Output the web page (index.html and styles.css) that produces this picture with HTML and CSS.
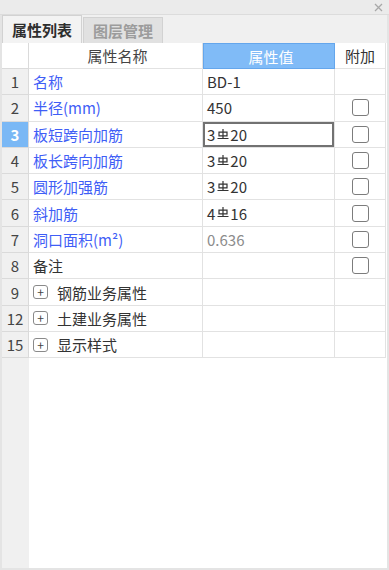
FILE: index.html
```html
<!DOCTYPE html>
<html lang="zh-CN">
<head>
  <meta charset="UTF-8">
  <title>属性列表</title>
  <link rel="stylesheet" href="styles.css">
</head>
<body>
  <div class="titlebar">
    <svg class="close" width="9" height="9" viewBox="0 0 9 9"><path d="M1 1L8 8M8 1L1 8" stroke="#a8a8a8" stroke-width="1.3"/></svg>
  </div>
  <div class="panel">
    <div class="tabs">
      <div class="tab active">属性列表</div>
      <div class="tab">图层管理</div>
    </div>
    <div class="grid">
      <div class="row head">
        <div class="cell num"></div>
        <div class="cell name">属性名称</div>
        <div class="cell value">属性值</div>
        <div class="cell extra">附加</div>
      </div>
      <div class="row">
        <div class="cell num">1</div>
        <div class="cell name link">名称</div>
        <div class="cell value">BD-1</div>
        <div class="cell extra"></div>
      </div>
      <div class="row">
        <div class="cell num">2</div>
        <div class="cell name link">半径(mm)</div>
        <div class="cell value">450</div>
        <div class="cell extra"><span class="check"></span></div>
      </div>
      <div class="row current">
        <div class="cell num">3</div>
        <div class="cell name link">板短跨向加筋</div>
        <div class="cell value">3<svg class="bar" width="12" height="11" viewBox="0 0 12 11"><path d="M6 0V9.5M2 3.2h8v3.6H2zM0.5 9.5h11" stroke="currentColor" fill="none" stroke-width="1.2"/></svg>20</div>
        <div class="cell extra"><span class="check"></span></div>
      </div>
      <div class="row">
        <div class="cell num">4</div>
        <div class="cell name link">板长跨向加筋</div>
        <div class="cell value">3<svg class="bar" width="12" height="11" viewBox="0 0 12 11"><path d="M6 0V9.5M2 3.2h8v3.6H2zM0.5 9.5h11" stroke="currentColor" fill="none" stroke-width="1.2"/></svg>20</div>
        <div class="cell extra"><span class="check"></span></div>
      </div>
      <div class="row">
        <div class="cell num">5</div>
        <div class="cell name link">圆形加强筋</div>
        <div class="cell value">3<svg class="bar" width="12" height="11" viewBox="0 0 12 11"><path d="M6 0V9.5M2 3.2h8v3.6H2zM0.5 9.5h11" stroke="currentColor" fill="none" stroke-width="1.2"/></svg>20</div>
        <div class="cell extra"><span class="check"></span></div>
      </div>
      <div class="row">
        <div class="cell num">6</div>
        <div class="cell name link">斜加筋</div>
        <div class="cell value">4<svg class="bar" width="12" height="11" viewBox="0 0 12 11"><path d="M6 0V9.5M2 3.2h8v3.6H2zM0.5 9.5h11" stroke="currentColor" fill="none" stroke-width="1.2"/></svg>16</div>
        <div class="cell extra"><span class="check"></span></div>
      </div>
      <div class="row">
        <div class="cell num">7</div>
        <div class="cell name link">洞口面积(m²)</div>
        <div class="cell value muted">0.636</div>
        <div class="cell extra"><span class="check"></span></div>
      </div>
      <div class="row">
        <div class="cell num">8</div>
        <div class="cell name">备注</div>
        <div class="cell value"></div>
        <div class="cell extra"><span class="check"></span></div>
      </div>
      <div class="row">
        <div class="cell num">9</div>
        <div class="cell name"><span class="expand">+</span>钢筋业务属性</div>
        <div class="cell value"></div>
        <div class="cell extra"></div>
      </div>
      <div class="row">
        <div class="cell num">12</div>
        <div class="cell name"><span class="expand">+</span>土建业务属性</div>
        <div class="cell value"></div>
        <div class="cell extra"></div>
      </div>
      <div class="row">
        <div class="cell num">15</div>
        <div class="cell name"><span class="expand">+</span>显示样式</div>
        <div class="cell value"></div>
        <div class="cell extra"></div>
      </div>
      <div class="filler"><div class="num"></div></div>
    </div>
  </div>
</body>
</html>
```

FILE: styles.css
```css
body {
  margin: 0;
  font-family: "Noto Sans CJK SC", "Noto Sans", sans-serif;
  font-size: 15px;
  color: #333;
  background: #fff;
}

.titlebar {
  height: 15px;
  box-sizing: border-box;
  background: #ebebeb;
  border-bottom: 1px solid #dcdcdc;
  display: flex;
  justify-content: flex-end;
  align-items: center;
  padding-right: 6px;
}

.panel {
  height: 555px;
  box-sizing: border-box;
  border: 2px solid #e4e4e4;
  border-top: none;
  display: flex;
  flex-direction: column;
}

.tabs {
  height: 28px;
  flex-shrink: 0;
  background: #f0f0f0;
  display: flex;
  align-items: flex-end;
}

.tab {
  width: 80px;
  height: 26px;
  box-sizing: border-box;
  margin-right: 1px;
  background: #e1e1e1;
  border: 1px solid #d2d2d2;
  border-bottom: none;
  color: #9c9c9c;
  font-weight: bold;
  display: flex;
  align-items: center;
  justify-content: center;
}

.tab.active {
  height: 28px;
  background: #f3f3f3;
  color: #2e2e2e;
}

.grid {
  flex: 1;
  display: flex;
  flex-direction: column;
}

.row {
  display: grid;
  grid-template-columns: 27px 174px 132px 51px;
  height: 26.3px;
  flex-shrink: 0;
}

.row.head {
  height: 26px;
}

.cell {
  box-sizing: border-box;
  border-right: 1px solid #e2e2e2;
  border-bottom: 1px solid #e2e2e2;
  display: flex;
  align-items: center;
  white-space: nowrap;
  overflow: hidden;
}

.num {
  background: #f0f0f0;
  border-color: #dadada;
  justify-content: center;
  color: #444;
}

.head .num {
  background: #fff;
}

.head .name {
  justify-content: center;
  color: #444;
}

.head .value {
  background: #80bbf7;
  border: 1px solid #64a6ec;
  color: #fff;
  justify-content: center;
}

.head .extra {
  justify-content: center;
  color: #333;
}

.name {
  padding-left: 4px;
}

.name.link {
  color: #3f5ef6;
}

.value {
  padding-left: 4px;
  color: #333;
}

.value.muted {
  color: #8c8c8c;
}

.extra {
  justify-content: center;
}

.current .num {
  background: #7ab8f5;
  color: #fff;
  font-weight: bold;
}

.current .value {
  box-shadow: inset 0 0 0 2px #727272;
}

.bar {
  margin: 0 1px 0 2px;
  align-self: flex-start;
  margin-top: 7px;
}

.check {
  width: 17px;
  height: 17px;
  box-sizing: border-box;
  border: 1.5px solid #7c7c7c;
  border-radius: 3px;
  background: #fff;
}

.expand {
  width: 15px;
  height: 14px;
  box-sizing: border-box;
  border: 1px solid #8a8a8a;
  border-radius: 3px;
  margin-right: 9px;
  display: flex;
  align-items: center;
  justify-content: center;
  font-size: 12px;
  line-height: 1;
  color: #444;
}

.filler {
  flex: 1;
  display: flex;
}

.filler .num {
  width: 27px;
}
```
